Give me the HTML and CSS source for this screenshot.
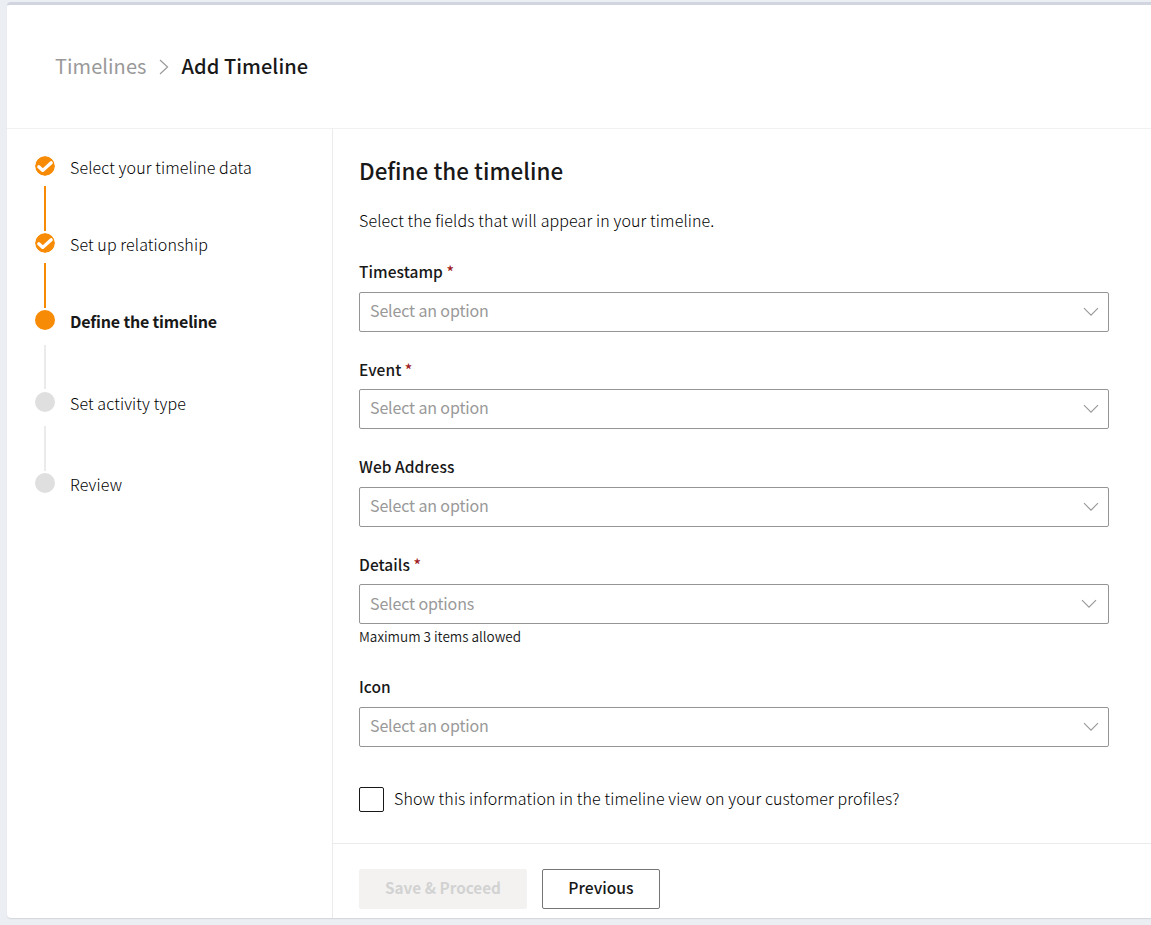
FILE: index.html
```
<!DOCTYPE html>
<html lang="en">
<head>
<meta charset="utf-8">
<title>Add Timeline</title>
<link rel="stylesheet" href="styles.css">
</head>
<body>
<svg width="0" height="0" class="defs">
  <symbol id="chevron" viewBox="0 0 16 10"><path d="M1 1.2 8 8.2 15 1.2" fill="none" stroke="currentColor" stroke-width="1.15"/></symbol>
  <symbol id="check" viewBox="0 0 20 20"><circle cx="10" cy="10" r="10" fill="#f88b06"/><path d="M3.8 10.8 7.8 14.4 16.2 6.8" fill="none" stroke="#fff" stroke-width="3.3" stroke-linecap="round" stroke-linejoin="round"/></symbol>
</svg>
<div class="card">
  <header class="header">
    <a class="crumb">Timelines</a>
    <svg class="crumb-sep" viewBox="0 0 10 16"><path d="M1 1 8.6 8 1 15" fill="none" stroke="currentColor" stroke-width="1.15"/></svg>
    <span class="crumb-current">Add Timeline</span>
  </header>
  <div class="body">
    <nav class="steps">
      <div class="step done"><div class="rail"><svg class="dot"><use href="#check"/></svg><i class="line"></i></div><span class="name">Select your timeline data</span></div>
      <div class="step done"><div class="rail"><svg class="dot"><use href="#check"/></svg><i class="line"></i></div><span class="name">Set up relationship</span></div>
      <div class="step current"><div class="rail"><i class="dot"></i><i class="line"></i></div><span class="name">Define the timeline</span></div>
      <div class="step next"><div class="rail"><i class="dot"></i><i class="line"></i></div><span class="name">Set activity type</span></div>
      <div class="step"><div class="rail"><i class="dot"></i></div><span class="name">Review</span></div>
    </nav>
    <main class="main">
      <div class="form">
        <h1 class="title">Define the timeline</h1>
        <p class="intro">Select the fields that will appear in your timeline.</p>
        <div class="field"><label class="label">Timestamp <b class="req">*</b></label><div class="select"><span class="ph">Select an option</span><svg class="chev"><use href="#chevron"/></svg></div></div>
        <div class="field"><label class="label">Event <b class="req">*</b></label><div class="select"><span class="ph">Select an option</span><svg class="chev"><use href="#chevron"/></svg></div></div>
        <div class="field"><label class="label">Web Address</label><div class="select"><span class="ph">Select an option</span><svg class="chev"><use href="#chevron"/></svg></div></div>
        <div class="field details"><label class="label">Details <b class="req">*</b></label><div class="select multi"><span class="ph">Select options</span><svg class="chev"><use href="#chevron"/></svg></div><p class="hint">Maximum 3 items allowed</p></div>
        <div class="field"><label class="label">Icon</label><div class="select"><span class="ph">Select an option</span><svg class="chev"><use href="#chevron"/></svg></div></div>
        <label class="check"><span class="box"></span><span class="check-text">Show this information in the timeline view on your customer profiles?</span></label>
      </div>
      <footer class="footer">
        <button class="btn save" disabled>Save &amp; Proceed</button>
        <button class="btn prev">Previous</button>
      </footer>
    </main>
  </div>
</div>
</body>
</html>
```
FILE: styles.css
```
* { box-sizing: border-box; }
body {
  margin: 0;
  height: 925px;
  overflow: hidden;
  padding: 2px 0 0 7px;
  background: #ebeef3;
  color: #181818;
  font-family: "Noto Sans CJK SC", "Noto Sans", sans-serif;
  font-size: 16px;
  line-height: 20px;
}
.defs { position: absolute; }
.card {
  display: flex;
  flex-direction: column;
  height: 916px;
  background: #fff;
  border-top: 3px solid #d1d5df;
  border-radius: 4px 0 0 4px;
  box-shadow: 0 1px 1px #d3d6db;
}
.header {
  display: flex;
  align-items: center;
  flex: none;
  height: 124px;
  padding: 0 0 2px 48px;
  border-bottom: 1px solid #f1f1f1;
  font-size: 20px;
}
.crumb { width: 91px; color: #999; white-space: nowrap; letter-spacing: 0.06px; }
.crumb-sep { width: 10px; height: 16px; margin: 2px 12.5px 0 13px; color: #999; }
.crumb-current { font-weight: 500; letter-spacing: 0.07px; }
.body { display: flex; flex: 1; min-height: 0; }
.steps {
  width: 326px;
  padding: 27px 0 0 28px;
  border-right: 1px solid #ebebeb;
}
.step { display: flex; gap: 15px; height: 77px; }
.step.current { height: 82px; }
.step.next { height: 81px; }
.rail { display: flex; flex-direction: column; align-items: center; width: 20px; }
.dot { display: block; flex: none; width: 20px; height: 20px; border-radius: 50%; background: #dfdfdf; }
.current .dot { background: #f88b06; }
.done .dot { background: none; }
.line { width: 2px; height: 44px; margin-top: 15px; background: #ebebeb; }
.done .line { height: 45px; margin-top: 10px; background: #f88b06; }
.next .line { margin-top: 14px; height: 45px; }
.name, .intro, .check { font-weight: 300; letter-spacing: 0.12px; color: #000; }
.name { padding-top: 1px; }
.current .name { color: #181818; font-weight: 700; letter-spacing: -0.18px; }
.main { flex: 1; display: flex; flex-direction: column; }
.form { height: 714px; padding: 26px 42px 0 26px; }
.title { margin: 0; font-size: 22.4px; line-height: 30px; font-weight: 500; letter-spacing: 0.04px; }
.intro { margin: 25px 0 31px; line-height: 20px; }
.field { margin-bottom: 27.45px; }
.details { margin-bottom: 30.6px; }
.label { display: block; height: 21px; margin-bottom: 10px; padding-top: 0.25px; font-size: 15.5px; font-weight: 500; letter-spacing: 0.05px; }
.field + .field { margin-top: -1px; }
.req { color: #a01c1c; font-weight: 500; }
.select {
  display: flex;
  align-items: center;
  justify-content: space-between;
  height: 40px;
  padding: 0 9px 0 10px;
  border: 1px solid #959595;
  border-radius: 2px;
  color: #999;
}
.ph { padding-bottom: 4px; letter-spacing: -0.14px; }
.chev { width: 16px; height: 10px; }
.multi { padding-right: 11px; }
.multi .ph { padding-bottom: 2px; }
.multi .chev { margin-bottom: 1px; }
.hint { margin: 2px 0 1px; font-size: 13.5px; line-height: 20px; font-weight: 350; }
.check { display: flex; align-items: center; gap: 10px; margin-top: 40px; }
.check-text { padding-bottom: 2px; }
.box { width: 25px; height: 25px; border: 1px solid #181818; border-radius: 2px; }
.footer { display: flex; gap: 15px; flex: 1; padding: 25px 26px 0; border-top: 1px solid #ebebeb; }
.btn {
  height: 40px;
  padding: 0 0 3px;
  border: 1px solid #757575;
  border-radius: 2px;
  background: #fff;
  color: #181818;
  font: 500 15.7px/20px "Noto Sans CJK SC", "Noto Sans", sans-serif;
}
.save { width: 168px; padding-bottom: 4px; border-color: #f3f2f1; background: #f3f2f1; color: #d2d2d2; font-weight: 700; font-size: 15.3px; }
.prev { width: 118px; }
```
